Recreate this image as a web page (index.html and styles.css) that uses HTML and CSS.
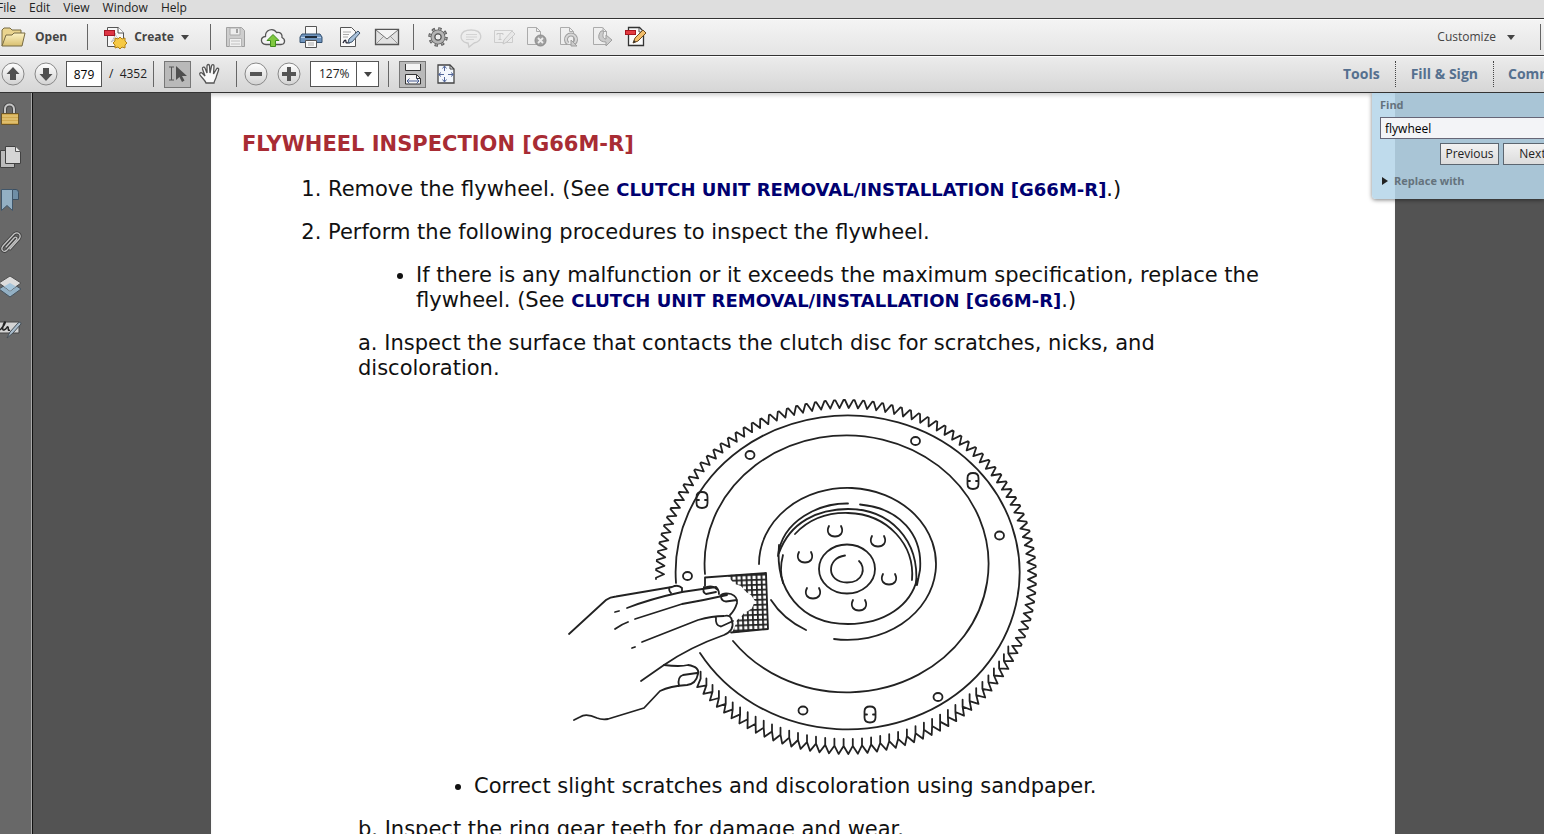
FILE: index.html
```html
<!DOCTYPE html>
<html lang="en">
<head>
<meta charset="utf-8">
<title>Workshop manual</title>
<link rel="stylesheet" href="styles.css">
</head>
<body>
<div class="app">
  <nav class="menubar" aria-label="Menu">
    <button>File</button><button>Edit</button><button>View</button><button>Window</button><button>Help</button>
  </nav>

  <div class="toolbar toolbar-main">
    <button class="labelled open">
      <svg width="26" height="22" viewBox="0 0 26 22"><defs><linearGradient id="fold" x2="0" y2="1"><stop stop-color="#fdf3c4"/><stop offset="1" stop-color="#d8bf70"/></linearGradient></defs><path d="M2 20V4L4 2h6l2 2h9v4" fill="#ead48e" stroke="#776a42"/><path d="M2 20L6 9h6l2-2h11l-3 13z" fill="url(#fold)" stroke="#776a42"/></svg>
      <span>Open</span>
    </button>
    <span class="sep"></span>
    <button class="labelled create">
      <svg width="24" height="24" viewBox="0 0 24 24"><path d="M4.500 2.500h11l5 5V21.500h-16z" fill="#f7f7f7" stroke="#555"/><path d="M15 2v6h6" fill="#fff" stroke="#555"/><path d="M8 17c3-3 4-6 4-9 1 4 3 6 6 6-4 0-7 1-10 3z" fill="none" stroke="#bbb"/><rect x="1.500" y="5.500" width="10" height="5" fill="#de3545" stroke="#a11825"/><path d="M17 12l2 2 3-1v3l2 2-2 2v3l-3-1-2 2-2-2-3 1v-3l-2-2 2-2v-3l3 1z" fill="#f6c944" stroke="#b28218"/></svg>
      <span>Create</span><i class="caret"></i>
    </button>
    <span class="sep"></span>
    <div class="group wide">
      <button aria-label="Save" class="dim"><svg width="24" height="24" viewBox="0 0 24 24"><path d="M3.500 2.500h15l3 3v16h-18z" fill="#bdbdbd" stroke="#777"/><path d="M7 3h10v7H7z" fill="#eee" stroke="#888"/><path d="M13 4h2v4h-2z" fill="#777"/><path d="M6.500 13.500h12v8h-12z" fill="#f5f5f5" stroke="#999"/><path d="M8 16h9M8 19h9" stroke="#aaa"/></svg></button>
      <button aria-label="Share"><svg width="26" height="24" viewBox="0 0 26 24"><path d="M6 19.500C0 19 0 12 5.500 11.500 5 5 13 2 16.500 7.500c4-1 6 2 5.500 5 4 2 3 7-1 7z" fill="#f4f4f4" stroke="#555" stroke-width="1.300"/><path d="M13 9.500l6 6h-3.500v6h-5v-6H7z" fill="#7fc83f" stroke="#3f8d1d"/></svg></button>
      <button aria-label="Print"><svg width="24" height="24" viewBox="0 0 24 24"><path d="M6.500 1.500h11v9h-11z" fill="#fafafa" stroke="#555"/><path d="M3 9h18l2 3v5.500H1V12z" fill="#6f94bd" stroke="#34506f"/><path d="M2 12.500h20" stroke="#b9d0e8"/><path d="M6 12h12" stroke="#1f2b38" stroke-width="2"/><path d="M6.500 15.500h11v7h-11z" fill="#fafafa" stroke="#555"/><path d="M9 18h6M9 20h6" stroke="#aaa"/></svg></button>
      <button aria-label="Sign"><svg width="24" height="24" viewBox="0 0 24 24"><path d="M3.500 2.500h11l4 4v15h-15z" fill="#fafafa" stroke="#555"/><path d="M6 7h8M6 9.500h6M6 12h5" stroke="#aaa"/><path d="M6 18c2-4 3-3 3-1s2 0 4 1" fill="none" stroke="#223" stroke-width="1.300"/><path d="M11 18l1-4 9-8 2 2-8 9z" fill="#a9c2dc" stroke="#41556b"/></svg></button>
      <button aria-label="Mail"><svg width="26" height="24" viewBox="0 0 26 24"><path d="M1.500 4.500h23v15h-23z" fill="#e2e2e2" stroke="#555" stroke-width="1.300"/><path d="M2 19l8-8M24 19l-8-8" stroke="#999"/><path d="M2 5l11 9 11-9" fill="#f4f4f4" stroke="#777"/></svg></button>
    </div>
    <span class="sep"></span>
    <div class="group narrow">
      <button aria-label="Settings"><svg width="24" height="24" viewBox="0 0 24 24"><circle cx="12" cy="12" r="8" fill="none" stroke="#5d5d5d" stroke-width="3.500" stroke-dasharray="3.200 3.083"/><circle cx="12" cy="12" r="5.200" fill="none" stroke="#5d5d5d" stroke-width="4.500"/><circle cx="12" cy="12" r="5.200" fill="none" stroke="#b4b4b4" stroke-width="3"/><circle cx="12" cy="12" r="8" fill="none" stroke="#aaa" stroke-width="1.500" stroke-dasharray="1.600 4.683" stroke-dashoffset="-.8"/><circle cx="12" cy="12" r="3" fill="#eee" stroke="#5d5d5d"/></svg></button>
      <button aria-label="Comment" class="faint"><svg width="24" height="24" viewBox="0 0 24 24"><path d="M8 18c-9-2-8-13 4-13s13 11 3 13l-5 4-1-4z" fill="#eee" stroke="#888" stroke-width="1.300"/><path d="M7 9.500h11M7 12h11M7 14.500h8" stroke="#999"/></svg></button>
      <button aria-label="Edit text" class="faint"><svg width="24" height="24" viewBox="0 0 24 24"><path d="M2.500 5.500h18v12h-18z" fill="#eee" stroke="#888"/><path d="M5 10V8.500h6V10M8 8.500v6M6.500 14.500h3" stroke="#777" fill="none"/><path d="M11 19l1-4 8-9 3 3-8 8z" fill="#ddd" stroke="#777"/></svg></button>
      <button aria-label="Delete page" class="dim"><svg width="24" height="24" viewBox="0 0 24 24"><path d="M2.500 2.500h9l4 4v13h-13z" fill="#f0f0f0" stroke="#888"/><path d="M11.500 2.500v4h4" fill="none" stroke="#888"/><circle cx="15.500" cy="15.500" r="5.500" fill="#777" stroke="#555"/><path d="M13 13l5 5M18 13l-5 5" stroke="#eee" stroke-width="1.800"/></svg></button>
      <button aria-label="Rotate page" class="dim"><svg width="24" height="24" viewBox="0 0 24 24"><path d="M2.500 2.500h9l4 4v13h-13z" fill="#f0f0f0" stroke="#888"/><path d="M11.500 2.500v4h4" fill="none" stroke="#888"/><path d="M10 18.500a5 5 0 1 1 6 0" fill="none" stroke="#777" stroke-width="4"/><path d="M10 18.500a5 5 0 1 1 6 0" fill="none" stroke="#ccc" stroke-width="2"/><path d="M13 15v6h6z" fill="#bbb" stroke="#777"/></svg></button>
      <button aria-label="Extract page" class="dim"><svg width="24" height="24" viewBox="0 0 24 24"><path d="M2.500 2.500h9l4 4v13h-13z" fill="#f0f0f0" stroke="#888"/><path d="M12 2.500v4h4" fill="none" stroke="#888"/><path d="M10 6c-4 5-3 11 5 11v4l6-6-6-5v4c-3 0-4-3-2-8z" fill="#bbb" stroke="#777"/></svg></button>
      <button aria-label="Edit PDF"><svg width="24" height="24" viewBox="0 0 24 24"><path d="M4.500 2.500h11l4 4v14h-15z" fill="#fafafa" stroke="#333" stroke-width="1.300"/><path d="M15 3v4h4" fill="none" stroke="#555"/><rect x="1.500" y="5.500" width="10" height="4" fill="#e23a40" stroke="#a8151e"/><path d="M9 18l2-5 8-8 3 3-8 8z" fill="#f1bd6a" stroke="#6e4a1c"/><path d="M9 18l1-3 2 2z" fill="#333"/></svg></button>
    </div>
    <button class="customize">Customize <i class="caret"></i></button>
    <span class="sep edge"></span>
  </div>

  <div class="toolbar toolbar-nav">
    <div class="group narrow first">
      <button aria-label="Previous page"><svg width="24" height="24" viewBox="0 0 24 24"><defs><linearGradient id="btn" x2="0" y2="1"><stop stop-color="#fff"/><stop offset="1" stop-color="#d2d2d2"/></linearGradient></defs><circle cx="12" cy="12" r="11" fill="url(#btn)" stroke="#888"/><path d="M12 5l6.500 7H15v6H9v-6H5.500z" fill="#505050"/></svg></button>
      <button aria-label="Next page"><svg width="24" height="24" viewBox="0 0 24 24"><circle cx="12" cy="12" r="11" fill="url(#btn)" stroke="#888"/><path d="M12 19l6.500-7H15V6H9v6H5.500z" fill="#505050"/></svg></button>
    </div>
    <input class="page-no" id="page" value="879" aria-label="Page">
    <label class="page-total" for="page">/&nbsp; 4352</label>
    <span class="sep"></span>
    <button class="toggle" aria-label="Select tool"><svg width="24" height="24" viewBox="0 0 24 24"><path d="M3 5h5M3 18h5M5.500 5v13" stroke="#555" fill="none"/><path d="M10 4v14l3.500-3 2.500 5 2.500-1.500-2.500-4.500h5z" fill="#505050"/></svg></button>
    <button class="hand" aria-label="Hand tool"><svg width="24" height="24" viewBox="0 0 24 24"><path d="M8 21c-1-3-4-5-6-8-1-2 1-3 2-2l3 3L4.500 7c-.5-2 2-2.500 2.500-1L9 11V4c0-2 2.500-2 2.500 0l.5 7 1.500-7c.5-2 2.700-1.500 2.500.3L15.500 12l3-5c1-1.500 2.800-.5 2 1.200L18.500 14c-.5 3-2 4-2.500 7z" fill="#fafafa" stroke="#555" stroke-width="1.300"/></svg></button>
    <span class="sep"></span>
    <div class="group narrow zoomers">
      <button aria-label="Zoom out"><svg width="24" height="24" viewBox="0 0 24 24"><circle cx="12" cy="12" r="11" fill="url(#btn)" stroke="#888"/><path d="M6 10h12v4H6z" fill="#555"/></svg></button>
      <button aria-label="Zoom in"><svg width="24" height="24" viewBox="0 0 24 24"><circle cx="12" cy="12" r="11" fill="url(#btn)" stroke="#888"/><path d="M10 5h4v5h5v4h-5v5h-4v-5H5v-4h5z" fill="#555"/></svg></button>
    </div>
    <div class="zoom"><select aria-label="Zoom"><option>127%</option></select><span><i class="caret"></i></span></div>
    <span class="sep"></span>
    <button class="toggle" aria-label="Scrolling pages"><svg width="24" height="24" viewBox="0 0 24 24"><path d="M4.500 2v6.500h15V2" fill="#f4f4f4" stroke="#333"/><path d="M4.500 22V12.500h11l4 4V22z" fill="#f4f4f4" stroke="#333"/><path d="M15.500 12.500v4h4" fill="none" stroke="#333"/><path d="M6 19h12M8.500 16.500L6 19l2.500 2.500M15.500 16.500L18 19l-2.500 2.500" fill="none" stroke="#4a5f94"/></svg></button>
    <button class="fit" aria-label="Fit page"><svg width="24" height="24" viewBox="0 0 24 24"><path d="M4 3h12l4 4v14H4z" fill="#f3f7fc" stroke="#444" stroke-width="1.300"/><path d="M16 3v4h4" fill="none" stroke="#444"/><path d="M10.500 4v5M10.500 15v5M5 12.500h5M14 12.500h5" stroke="#53679a"/><path d="M8.500 6.500l2-2.500 2 2.500M8.500 17.500l2 2.500 2-2.500M7 10.500l-2.500 2L7 14.500M17 10.500l2.500 2-2.500 2" fill="none" stroke="#53679a"/></svg></button>
    <div class="panes"><button>Tools</button><button>Fill &amp; Sign</button><button class="cut">Comment</button></div>
  </div>

  <div class="workspace">
    <aside class="sidebar">
      <button aria-label="Security"><svg width="24" height="24" viewBox="0 0 24 24"><path d="M5 12V7c0-6 9-6 9 0v5" fill="none" stroke="#484848" stroke-width="4"/><path d="M5 12V7c0-6 9-6 9 0v5" fill="none" stroke="#c6c6c6" stroke-width="2"/><path d="M1.500 11.500h17v11h-17z" fill="#d0a950" stroke="#6a5529"/><path d="M2 14h16M2 17h16M2 20h16" stroke="#ecd289"/></svg></button>
      <button aria-label="Pages"><svg width="24" height="24" viewBox="0 0 24 24"><path d="M.5 5.500h14v17H.5z" fill="#bbb" stroke="#414141"/><path d="M5.500 1.500h10l5 5v12h-15z" fill="#d5d5d5" stroke="#414141"/><path d="M15.500 1.500v5h5" fill="#eee" stroke="#555"/></svg></button>
      <button aria-label="Bookmarks"><svg width="24" height="24" viewBox="0 0 24 24"><path d="M12 1.500h4q2.500 0 2.500 3v7H12z" fill="#6f8ea6" stroke="#3b4e60"/><path d="M1.500 1.500h11v21l-5.500-5-5.500 5z" fill="#93afc3" stroke="#40566a"/></svg></button>
      <button aria-label="Attachments"><svg width="24" height="24" viewBox="0 0 24 24"><g fill="none" stroke-linecap="round"><path d="M6 16l8-9c2-2 4 0 2 2L7 19c-3 3-7 0-4-4L14 3c4-3 8 1 5 5l-9 10" stroke="#3f3f3f" stroke-width="3"/><path d="M6 16l8-9c2-2 4 0 2 2L7 19c-3 3-7 0-4-4L14 3c4-3 8 1 5 5l-9 10" stroke="#c4c4c4" stroke-width="1.300"/></g></svg></button>
      <button aria-label="Layers"><svg width="24" height="24" viewBox="0 0 24 24"><path d="M-1 15l11-7 11 7-11 8z" fill="#93b0c4" stroke="#46535e"/><path d="M-1 9l11-7 11 7-11 8z" fill="#dcdcdc" stroke="#505050"/><path d="M4 12.500L10 9l6 3.500-6 4.500z" fill="#a5c5db"/></svg></button>
      <button aria-label="Signatures"><svg width="24" height="24" viewBox="0 0 24 24"><path d="M-1 5h20v11H-1z" fill="#d4d4d4" stroke="#444"/><path d="M0 13c4-4 6-8 5-8s-4 9-1 8 3-4 4-3-1 4 2 3" fill="none" stroke="#222" stroke-width="1.500"/><path d="M7 21l3-6 8-9q3-2 3 1l-8 9z" fill="#a9bccb" stroke="#454e56"/></svg></button>
    </aside>

    <main class="document">
      <article class="sheet">
        <h1>FLYWHEEL INSPECTION [G66M-R]</h1>
        <ol class="steps">
          <li>Remove the flywheel. (See <a href="#clutch">CLUTCH UNIT REMOVAL/INSTALLATION [G66M-R]</a>.)</li>
          <li>Perform the following procedures to inspect the flywheel.
            <ul class="notes"><li>If there is any malfunction or it exceeds the maximum specification, replace the flywheel. (See <a href="#clutch">CLUTCH UNIT REMOVAL/INSTALLATION [G66M-R]</a>.)</li></ul>
            <div class="sub">
              <p>a. Inspect the surface that contacts the clutch disc for scratches, nicks, and discoloration.</p>
              <svg class="figure" viewBox="560 395 490 365" role="img" aria-label="Hand sanding a flywheel">
                <defs><pattern id="grit" width="5" height="5" patternUnits="userSpaceOnUse" patternTransform="rotate(-2)"><path d="M0 0h5M0 0v5" stroke="#222" stroke-width="3.600"/></pattern></defs>
                <g class="ink">
                  <path id="teeth"/>
                  <path d="M676 583A172 157 0 1 1 700 653"/>
                  <path d="M705 574A142 128.500 0 1 1 733 641"/>
                  <path d="M759 564A88.500 76 0 1 1 834 639M771 600Q783 619 806 630"/>
                  <path d="M778 556C782 520 820 503 848 503.500M860 504.500C900 508 923 535 920 570L917 585"/>
                  <path d="M779 553C790 522 818 509 848 509 890 509 920 540 916 585"/>
                  <path d="M795 534C810 518 828 512.500 848 513 888 514 915 545 912 580"/>
                  <path d="M779 545C775 590 800 624 848 624 885 624 911 605 917 579"/>
                  <path d="M783 555Q779 570 783 583"/>
                  <ellipse cx="847" cy="569" rx="28" ry="24.500"/>
                  <path d="M845 555.500C826 558 826 582.500 847 582.500 864 582.500 866 567 859 561"/>
                  <path d="M829 526c-7 14 19 14 12 0M872 536c-7 14 19 14 12 0M883 574c-7 14 19 14 12 0M853 600c-7 14 19 14 12 0M807 588c-7 14 19 14 12 0M799 552c-7 14 19 14 12 0"/>
                  <g><ellipse cx="750" cy="455" rx="4.500" ry="4"/><ellipse cx="915.500" cy="441" rx="4.500" ry="4"/><ellipse cx="999.500" cy="535.500" rx="4.500" ry="4"/><ellipse cx="938" cy="697" rx="4.500" ry="4"/><ellipse cx="803" cy="710.500" rx="4.500" ry="4"/><ellipse cx="687.500" cy="576" rx="4.500" ry="4"/></g>
                  <path id="slot" d="M696.500 497q0-5 5.500-5t5.500 5v6q0 5-5.500 5t-5.500-5zM697 500h2M705 500h2"/><use href="#slot" x="271" y="-19"/><use href="#slot" x="168" y="214.500"/>
                </g>
                <path d="M727 575L766 573 768 629 732 633 735 626 737 620 741 617 744 613 748 611 752 608 755 601 751 595 746 592 741 586 735 584 731 580z" fill="url(#grit)"/>
                <g class="ink">
                  <path d="M705 586V577.500L766 573 768 629 731 632.500"/>
                  <path d="M569 634L606 600Q610 597 616 596.500L672 587Q678 584 682 588V592M670 587Q668 590 671 593"/>
                  <path d="M615 612l4-1M627 608Q650 599 682 592L716 587Q719 590 719 594M704 587Q702 592 706 594L716 592M704 588Q712 584 718 590"/>
                  <path d="M615 629Q622 624 628 622M635 619L682 604Q705 600 727 595M720 596Q723 592 731 594 738 597 737 603 735 610 730 615M721 596Q721 601 726 601.500L737 600"/>
                  <path d="M632 648l3-1M642 642L698 620Q712 616 724 616 731 614 732 621 735 630 724 635 690 647 664 665L641 681M716 617Q715 626 721 626.500L733 621"/>
                  <path d="M664 665Q680 667 688 665 700 667 698 674 696 684 687 685 670 686 660 691L644 708 608 719Q602 720 597 718 586 713 580 717L574 720M679 686Q677 677 683 675L697 673"/>
                </g>
              </svg>
              <ul class="notes after"><li>Correct slight scratches and discoloration using sandpaper.</li></ul>
              <p>b. Inspect the ring gear teeth for damage and wear.</p>
            </div>
          </li>
        </ol>
      </article>

      <form class="find">
        <div class="find-body">
          <label for="find">Find</label>
          <input id="find" value="flywheel">
          <div class="find-actions"><button type="button">Previous</button><button type="button">Next</button></div>
          <button type="button" class="replace"><i></i>Replace with</button>
        </div>
      </form>
    </main>
  </div>
</div>
<script src="teeth.js"></script>
</body>
</html>
```
FILE: styles.css
```css
* { box-sizing: border-box; }
html, body { height: 100%; }
body { margin: 0; overflow: hidden; font: 12px/16px "Open Sans", "Noto Sans", sans-serif; color: #222; }
button { font: inherit; color: inherit; background: none; border: 0; padding: 0; margin: 0; }
svg { display: block; }

.app { height: 100vh; display: flex; flex-direction: column; }
.menubar { height: 18px; display: flex; gap: 13px; background: #dedede; align-items: center; padding-bottom: 2px; margin-left: -3px; flex: none; }

.toolbar { height: 37px; flex: none; display: flex; align-items: center; border-top: 1px solid #333; box-shadow: inset 0 1px #fff; overflow: hidden; white-space: nowrap; }
.toolbar-main { background: linear-gradient(#f4f4f4, #e5e5e5); }
.toolbar-nav { height: 38px; background: linear-gradient(#ececec, #d6d6d6); border-bottom: 1px solid #333; }
.sep { width: 1px; height: 26px; background: #666; flex: none; }
.toolbar svg { flex: none; }
.caret { display: inline-block; border: 4px solid transparent; border-top: 5px solid #444; border-bottom: 0; }
.labelled { display: flex; align-items: center; font-weight: bold; font-size: 12px; color: #444; gap: 9px; }
.open { margin-right: 20px; }
.create { margin: 0 21px 0 15px; gap: 7px; }
.group { display: flex; align-items: center; }
.group button { display: flex; justify-content: center; flex: none; }
.wide { margin: 0 7px 0 5px; }
.wide button { width: 38px; }
.narrow button { width: 33px; }
.toolbar-main .narrow { margin-left: 8px; }
.dim { opacity: .65; }
.faint { opacity: .3; }
.customize { margin-left: auto; color: #444; font-size: 12px; display: flex; align-items: center; gap: 11px; }
.edge { margin: 0 3px 0 25px; }

.first { margin: 0 4px 0 -4px; }
.page-no { width: 36px; height: 26px; border: 1px solid #555; font: inherit; text-align: center; padding: 0; background: #fff; }
.page-total { margin: 0 8px 0 7px; width: 36px; }
.toggle { width: 27px; height: 27px; margin: 0 0 0 10px; border: 1px solid #777; background: #b9b9b9; display: flex; align-items: center; justify-content: center; flex: none; }
.hand { margin: 0 14px 0 7px; }
.zoomers { margin: 0 5px 0 2px; }
.zoom { display: flex; width: 69px; height: 26px; border: 1px solid #555; background: #fff; margin-right: 9px; flex: none; }
.zoom select { appearance: none; border: 0; background: none; font: inherit; color: inherit; width: 45px; padding: 0 0 0 8px; }
.zoom span { flex: 1; border-left: 1px solid #555; display: flex; align-items: center; justify-content: center; }
.fit { margin-left: 8px; }
.panes { margin-left: auto; display: flex; font: bold 14px/26px "Open Sans", "Noto Sans", sans-serif; color: #55708f; }
.panes button { padding: 0 15px; border-left: 1px dotted #444; }
.panes button:first-child { border: 0; }
.panes .cut { width: 51px; padding: 0 0 0 14px; overflow: hidden; text-align: left; }

.workspace { flex: 1; min-height: 0; display: flex; background: #535353; }
.sidebar { width: 33px; flex: none; background: #686868; border-right: 1px solid #111; box-shadow: inset -1px 0 #aaa; padding-top: 9px; display: flex; flex-direction: column; gap: 19px; }
.sidebar button { width: 24px; height: 24px; overflow: hidden; }
.document { flex: 1; min-width: 0; position: relative; overflow: hidden; }

.sheet { margin: 0 149px 0 178px; padding: 39px 130px 38px 31px; background: #fff; box-shadow: inset 0 4px 4px -2px #ccc; color: #111; font: 21px/25px "DejaVu Sans", Verdana, sans-serif; }
.sheet h1 { margin: 0 0 20px; font-size: 21px; line-height: 25px; color: #a82c34; }
.sheet a { color: #000070; font-weight: bold; font-size: 18px; line-height: 1; text-decoration: none; }
.steps { margin: 0; padding-left: 86px; }
.steps > li + li { margin-top: 18px; }
.notes { margin: 18px 0; padding-left: 88px; list-style: disc; }
.sub { margin-left: 30px; }
.sub p { margin: 0; }
.sub .notes { padding-left: 116px; }
.figure { width: 490px; height: 365px; margin: 14px 0 14px 202px; }
.sub .after { margin-top: 0; }
.ink { fill: none; stroke: #222; stroke-width: 1.800; stroke-linecap: round; stroke-linejoin: round; }

.find { position: absolute; top: 0; right: 0; width: 172px; overflow: hidden; background: rgba(182, 214, 233, .87); box-shadow: 0 1px 4px rgba(0, 0, 0, .5); padding: 4px 0 10px 8px; border-radius: 0 0 0 4px; }
.find-body { width: 190px; display: flex; flex-direction: column; align-items: flex-start; }
.find label, .replace { font-weight: bold; font-size: 11px; color: #64727c; }
.find input { width: 190px; height: 22px; margin: 4px 0; border: 1px solid #667; background: #f3f4f7; font: inherit; padding: 0 4px; }
.find-actions { display: flex; gap: 4px; margin-left: 60px; }
.find-actions button { width: 59px; height: 22px; border: 1px solid #5c6670; background: linear-gradient(#f2f2f2, #dcdcdc); }
.replace { display: flex; align-items: center; gap: 6px; margin: 8px 0 0 2px; }
.replace i { border: 4px solid transparent; border-left: 6px solid #222; border-right: 0; }
```
FILE: teeth.js
```js
// Ring gear outline: an elliptical zigzag, with a vertical tick between teeth on the lower half.
var cx = 846, cy = 577, rx = 190, ry = 177, count = 112;
var from = 143, to = -182;
function at(deg, inset) {
  var t = deg * Math.PI / 180;
  return (cx + (rx - inset) * Math.cos(t)).toFixed(1) + " " + (cy + (ry - inset) * Math.sin(t)).toFixed(1);
}
var d = "";
var step = (to - from) / count;
for (var i = 0; i < count; i++) {
  var a = from + step * i;
  var lower = Math.sin(a * Math.PI / 180) > 0.45;
  d += (i ? "L" : "M") + at(a, 8);
  if (lower) {
    d += "v-7v7L" + at(a + step / 2, 0);
  } else {
    d += "L" + at(a + step * 0.4, 0) + "L" + at(a + step * 0.55, 0);
  }
}
document.getElementById("teeth").setAttribute("d", d);
```
